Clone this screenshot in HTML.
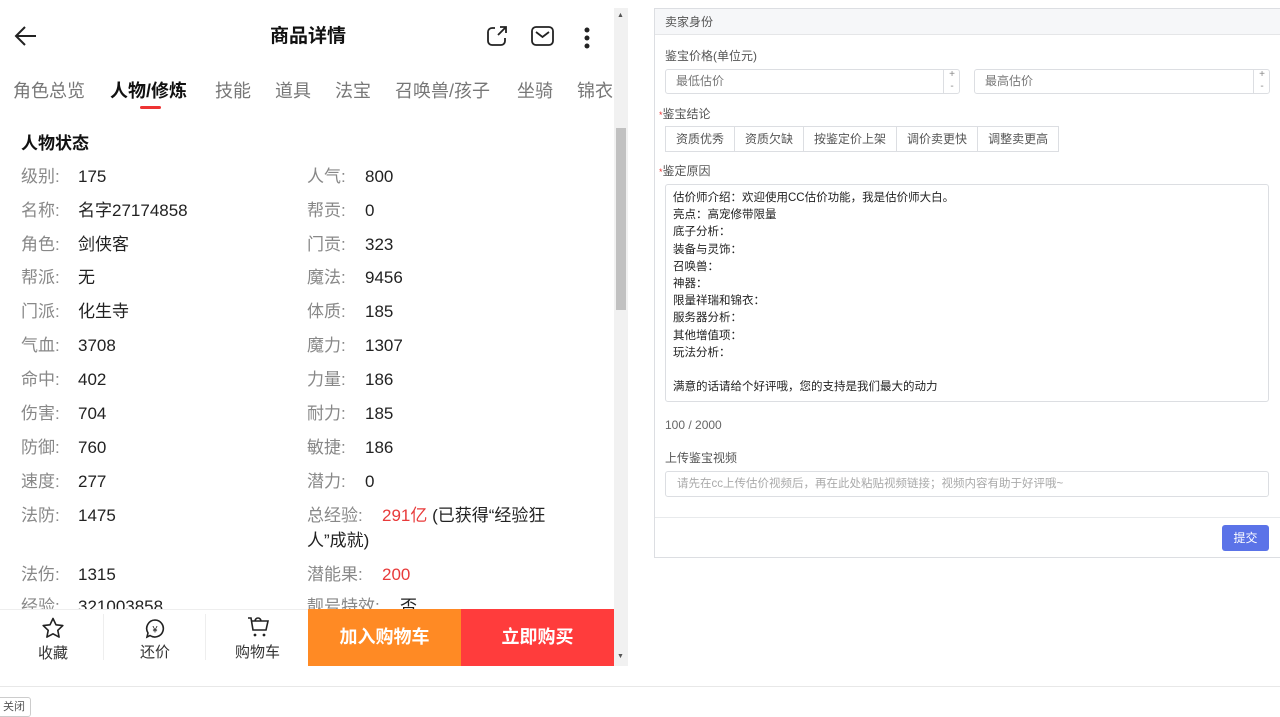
<!DOCTYPE html>
<html><head><meta charset="utf-8"><style>
*{margin:0;padding:0;box-sizing:border-box}
body{width:1280px;height:708px;background:#fff;font-family:"Liberation Sans","Noto Sans CJK SC",sans-serif;position:relative;overflow:hidden;color:#333}
.a{position:absolute;white-space:nowrap}
.l{color:#888;font-size:17px;line-height:22px;height:22px}
.v{color:#222;font-size:17px;line-height:22px;height:22px}
.tab{font-size:18px;color:#777;top:79px;line-height:24px}
.rl{font-size:12px;color:#555;line-height:16px}
.inp{position:absolute;border:1px solid #dcdee2;border-radius:3px;background:#fff}
.btn{display:inline-block;border:1px solid #dcdee2;margin-right:-1px;padding:0 10px;height:26px;line-height:24px;font-size:12px;color:#555;background:#fff}
</style></head><body>
<svg class="a" style="left:14px;top:25px" width="24" height="22" viewBox="0 0 24 22"><path d="M22 11H3M11 2L2 11l9 9" fill="none" stroke="#222" stroke-width="2"/></svg>
<div class="a" style="left:270px;top:24px;font-size:19px;font-weight:bold;color:#111;line-height:26px">商品详情</div>
<svg class="a" style="left:486px;top:25px" width="22" height="22" viewBox="0 0 22 22"><path d="M9 3H6a4 4 0 0 0-4 4v9a4 4 0 0 0 4 4h9a4 4 0 0 0 4-4v-3M12 10L20 2M14 2h6v6" fill="none" stroke="#222" stroke-width="1.8"/></svg>
<svg class="a" style="left:531px;top:26px" width="23" height="20" viewBox="0 0 23 20"><rect x="1" y="1" width="21" height="18" rx="4" fill="none" stroke="#222" stroke-width="1.8"/><path d="M5 6l6.5 5L18 6" fill="none" stroke="#222" stroke-width="1.8"/></svg>
<svg class="a" style="left:582px;top:26px" width="10" height="24"><circle cx="5" cy="4" r="2.5" fill="#222"/><circle cx="5" cy="12" r="2.5" fill="#222"/><circle cx="5" cy="20" r="2.5" fill="#222"/></svg>
<div class="a tab" style="left:13px">角色总览</div>
<div class="a tab" style="left:110px;color:#111;font-weight:bold">人物/修炼</div>
<div class="a" style="left:140px;top:106px;width:21px;height:3px;background:#e33;border-radius:2px"></div>
<div class="a tab" style="left:215px">技能</div>
<div class="a tab" style="left:275px">道具</div>
<div class="a tab" style="left:335px">法宝</div>
<div class="a tab" style="left:395px">召唤兽/孩子</div>
<div class="a tab" style="left:517px">坐骑</div>
<div class="a tab" style="left:577px">锦衣</div>
<div class="a" style="left:614px;top:8px;width:14px;height:658px;background:#f1f1f1"></div>
<div class="a" style="left:616px;top:128px;width:10px;height:182px;background:#c1c1c1"></div>
<div class="a" style="left:617px;top:12px;font-size:7px;color:#555">▲</div>
<div class="a" style="left:617px;top:653px;font-size:7px;color:#555">▼</div>
<div class="a" style="left:21px;top:133px;font-size:17px;font-weight:bold;color:#111;line-height:22px">人物状态</div>
<div class="a l" style="left:21px;top:166px">级别:</div><div class="a v" style="left:78px;top:166px">175</div>
<div class="a l" style="left:307px;top:166px">人气:</div><div class="a v" style="left:365px;top:166px">800</div>
<div class="a l" style="left:21px;top:200px">名称:</div><div class="a v" style="left:78px;top:200px">名字27174858</div>
<div class="a l" style="left:307px;top:200px">帮贡:</div><div class="a v" style="left:365px;top:200px">0</div>
<div class="a l" style="left:21px;top:234px">角色:</div><div class="a v" style="left:78px;top:234px">剑侠客</div>
<div class="a l" style="left:307px;top:234px">门贡:</div><div class="a v" style="left:365px;top:234px">323</div>
<div class="a l" style="left:21px;top:267px">帮派:</div><div class="a v" style="left:78px;top:267px">无</div>
<div class="a l" style="left:307px;top:267px">魔法:</div><div class="a v" style="left:365px;top:267px">9456</div>
<div class="a l" style="left:21px;top:301px">门派:</div><div class="a v" style="left:78px;top:301px">化生寺</div>
<div class="a l" style="left:307px;top:301px">体质:</div><div class="a v" style="left:365px;top:301px">185</div>
<div class="a l" style="left:21px;top:335px">气血:</div><div class="a v" style="left:78px;top:335px">3708</div>
<div class="a l" style="left:307px;top:335px">魔力:</div><div class="a v" style="left:365px;top:335px">1307</div>
<div class="a l" style="left:21px;top:369px">命中:</div><div class="a v" style="left:78px;top:369px">402</div>
<div class="a l" style="left:307px;top:369px">力量:</div><div class="a v" style="left:365px;top:369px">186</div>
<div class="a l" style="left:21px;top:403px">伤害:</div><div class="a v" style="left:78px;top:403px">704</div>
<div class="a l" style="left:307px;top:403px">耐力:</div><div class="a v" style="left:365px;top:403px">185</div>
<div class="a l" style="left:21px;top:437px">防御:</div><div class="a v" style="left:78px;top:437px">760</div>
<div class="a l" style="left:307px;top:437px">敏捷:</div><div class="a v" style="left:365px;top:437px">186</div>
<div class="a l" style="left:21px;top:471px">速度:</div><div class="a v" style="left:78px;top:471px">277</div>
<div class="a l" style="left:307px;top:471px">潜力:</div><div class="a v" style="left:365px;top:471px">0</div>
<div class="a l" style="left:21px;top:505px">法防:</div><div class="a v" style="left:78px;top:505px">1475</div>
<div class="a l" style="left:307px;top:505px">总经验:</div><div class="a v" style="left:382px;top:505px"><span style="color:#e83a3a">291亿</span> (已获得“经验狂</div>
<div class="a v" style="left:307px;top:530px">人”成就)</div>
<div class="a l" style="left:21px;top:564px">法伤:</div><div class="a v" style="left:78px;top:564px">1315</div>
<div class="a l" style="left:307px;top:564px">潜能果:</div><div class="a v" style="left:382px;top:564px;color:#e83a3a">200</div>
<div class="a l" style="left:21px;top:596px">经验:</div><div class="a v" style="left:78px;top:596px">321003858</div>
<div class="a l" style="left:307px;top:596px">靓号特效:</div><div class="a v" style="left:400px;top:596px">否</div>
<div class="a" style="left:0;top:609px;width:308px;height:57px;background:#fff;border-top:1px solid #eee"></div>
<div class="a" style="left:103px;top:614px;width:1px;height:46px;background:#eee"></div>
<div class="a" style="left:205px;top:614px;width:1px;height:46px;background:#eee"></div>
<svg class="a" style="left:41px;top:617px" width="24" height="22" viewBox="0 0 24 22"><path d="M12 1.5l3 6.3 6.8.8-5 4.7 1.3 6.8L12 16.8 5.9 20.1l1.3-6.8-5-4.7 6.8-.8z" fill="none" stroke="#222" stroke-width="1.6" stroke-linejoin="round"/></svg>
<div class="a" style="left:38px;top:642px;font-size:15px;color:#333">收藏</div>
<svg class="a" style="left:144px;top:618px" width="22" height="22" viewBox="0 0 22 22"><path d="M11 2a8.5 8.5 0 1 1-5 15.5L3 19l1-4A8.5 8.5 0 0 1 11 2z" fill="none" stroke="#222" stroke-width="1.6"/><text x="11" y="14.5" font-size="9" text-anchor="middle" fill="#222" font-family="Liberation Sans">¥</text></svg>
<div class="a" style="left:140px;top:641px;font-size:15px;color:#333">还价</div>
<svg class="a" style="left:246px;top:616px" width="24" height="22" viewBox="0 0 24 22"><path d="M2 2h3l2 12h13l2-9H6M9 5a3 3 0 0 1 6 0" fill="none" stroke="#222" stroke-width="1.6"/><circle cx="9" cy="19" r="1.4" fill="#222"/><circle cx="18" cy="19" r="1.4" fill="#222"/></svg>
<div class="a" style="left:235px;top:641px;font-size:15px;color:#333">购物车</div>
<div class="a" style="left:308px;top:609px;width:153px;height:57px;background:#ff8a24;color:#fff;font-size:18px;font-weight:bold;text-align:center;line-height:57px">加入购物车</div>
<div class="a" style="left:461px;top:609px;width:153px;height:57px;background:#ff3c3c;color:#fff;font-size:18px;font-weight:bold;text-align:center;line-height:57px">立即购买</div>
<div class="a" style="left:0;top:686px;width:1280px;height:1px;background:#e8e8e8"></div>
<div class="a" style="left:-6px;top:697px;width:37px;height:20px;border:1px solid #ccc;border-radius:3px;font-size:11px;color:#555;padding-left:8px;line-height:18px">关闭</div>
<div class="a" style="left:654px;top:8px;width:626px;height:550px;border:1px solid #dcdee2;border-right:none"></div>
<div class="a" style="left:655px;top:9px;width:625px;height:26px;background:#f6f7f9;border-bottom:1px solid #e5e6e8"></div>
<div class="a rl" style="left:665px;top:14px">卖家身份</div>
<div class="a rl" style="left:665px;top:48px">鉴宝价格(单位元)</div>
<div class="inp" style="left:665px;top:69px;width:295px;height:25px"></div>
<div class="a" style="left:943px;top:69px;width:17px;height:25px;border-left:1px solid #dcdee2;font-size:10px;color:#888;text-align:center;line-height:12px">+<br>-</div>
<div class="a" style="left:676px;top:73px;font-size:12px;color:#777;line-height:16px">最低估价</div>
<div class="inp" style="left:974px;top:69px;width:296px;height:25px"></div>
<div class="a" style="left:1253px;top:69px;width:17px;height:25px;border-left:1px solid #dcdee2;font-size:10px;color:#888;text-align:center;line-height:12px">+<br>-</div>
<div class="a" style="left:985px;top:73px;font-size:12px;color:#777;line-height:16px">最高估价</div>
<div class="a rl" style="left:659px;top:106px"><span style="color:#e33;font-size:9px">*</span>鉴宝结论</div>
<div class="a" style="left:665px;top:126px;font-size:0"><span class="btn">资质优秀</span><span class="btn">资质欠缺</span><span class="btn">按鉴定价上架</span><span class="btn">调价卖更快</span><span class="btn">调整卖更高</span></div>
<div class="a rl" style="left:659px;top:163px"><span style="color:#e33;font-size:9px">*</span>鉴定原因</div>
<div class="inp" style="left:665px;top:184px;width:604px;height:218px"></div>
<div class="a" style="left:673px;top:190px;font-size:11.5px;line-height:17.2px;color:#222;white-space:pre">估价师介绍：欢迎使用CC估价功能，我是估价师大白。
亮点：高宠修带限量
底子分析：
装备与灵饰：
召唤兽：
神器：
限量祥瑞和锦衣：
服务器分析：
其他增值项：
玩法分析：

满意的话请给个好评哦，您的支持是我们最大的动力</div>
<div class="a" style="left:665px;top:417px;font-size:12px;color:#666;line-height:16px">100 / 2000</div>
<div class="a rl" style="left:665px;top:450px">上传鉴宝视频</div>
<div class="inp" style="left:665px;top:471px;width:604px;height:26px"></div>
<div class="a" style="left:677px;top:476px;font-size:11.5px;color:#aaa;line-height:16px">请先在cc上传估价视频后，再在此处粘贴视频链接；视频内容有助于好评哦~</div>
<div class="a" style="left:655px;top:517px;width:625px;height:1px;background:#e8eaec"></div>
<div class="a" style="left:1222px;top:525px;width:47px;height:26px;background:#5b73e8;border-radius:3px;color:#fff;font-size:12px;text-align:center;line-height:26px">提交</div>
</body></html>
